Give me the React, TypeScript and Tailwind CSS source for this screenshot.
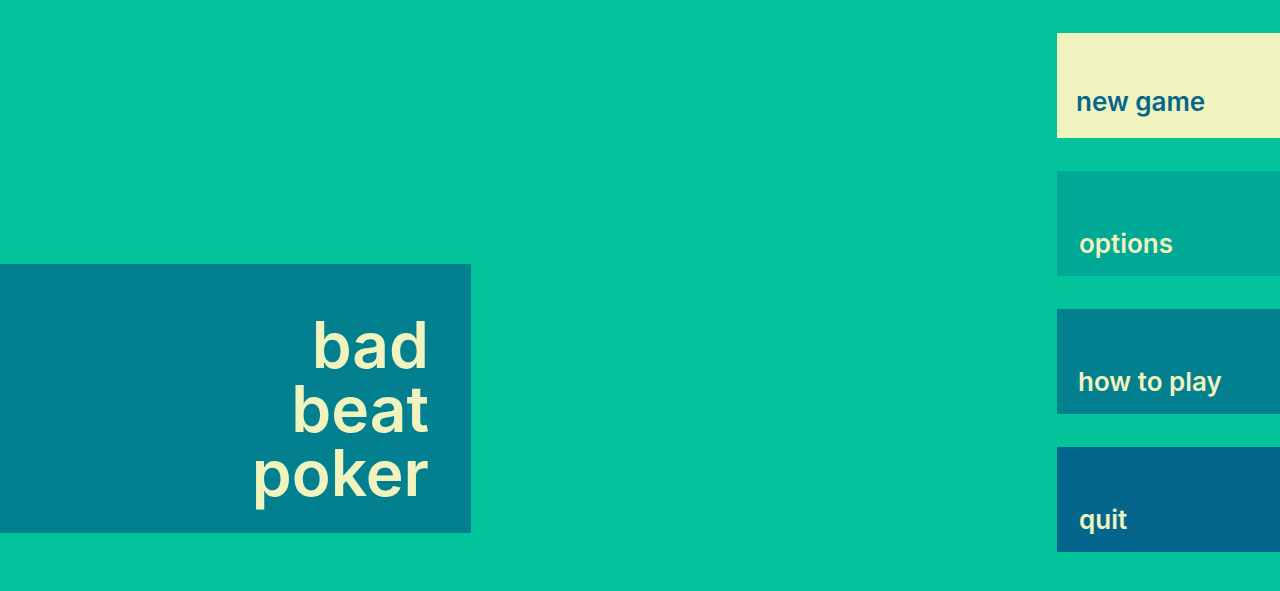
import React from "react";

const buttons = [
  { label: "new game", cls: "bg-[#F0F3BD] text-[#05668D] pl-[19px] pb-[23px]" },
  { label: "options", cls: "bg-[#00A896] text-[#F0F3BD] pl-[22px] pb-[19px]" },
  { label: "how to play", cls: "bg-[#028090] text-[#F0F3BD] pl-[21px] pb-[19px]" },
  { label: "quit", cls: "bg-[#05668D] text-[#F0F3BD] pl-[22px] pb-[19px]" },
];

export default function App() {
  return (
    <div
      className="w-full h-[591px] bg-[#02C39A] flex justify-between overflow-hidden"
      style={{ fontFamily: "Inter, 'Noto Sans', sans-serif" }}
    >
      <div className="mt-[264px] w-[471px] h-[269px] bg-[#028090] flex flex-col items-end pt-[49px] pr-[42px]">
        <div className="text-[64px] leading-[64px] font-semibold text-[#F0F3BD] text-right">
          <div>bad</div>
          <div>beat</div>
          <div>poker</div>
        </div>
      </div>
      <div className="mt-[33px] w-[223px] flex flex-col gap-[33px]">
        {buttons.map((b) => (
          <div
            key={b.label}
            className={`h-[105px] flex items-end text-[26px] leading-[26px] font-semibold ${b.cls}`}
          >
            {b.label}
          </div>
        ))}
      </div>
    </div>
  );
}
